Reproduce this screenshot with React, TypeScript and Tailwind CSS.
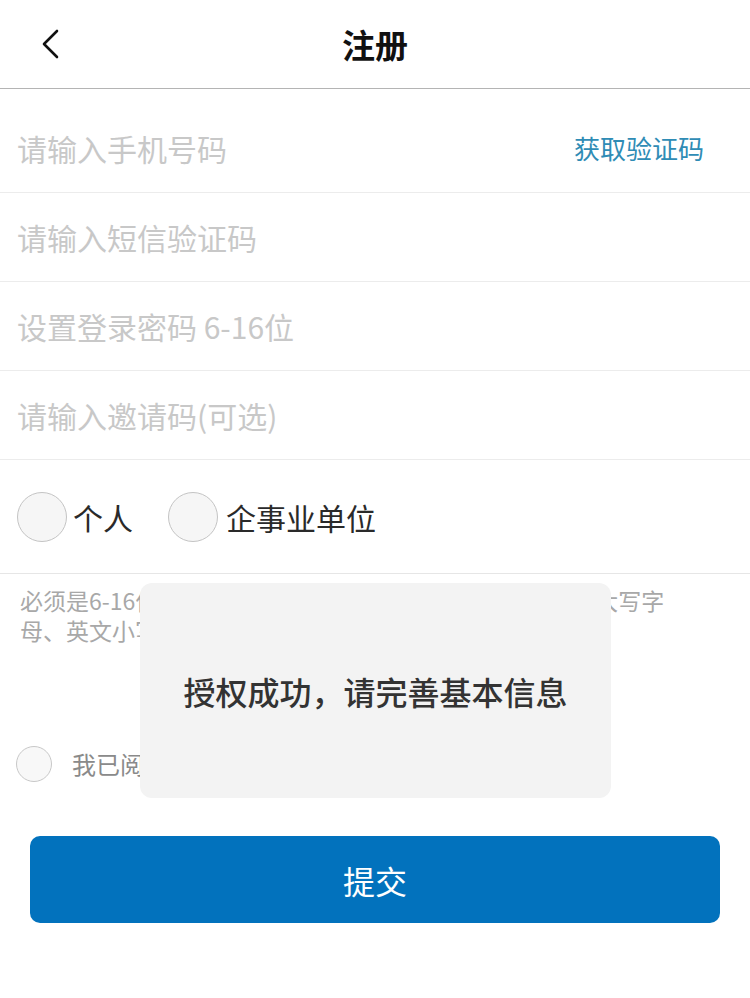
import React from "react";

export default function App() {
  return (
    <div className="relative w-[750px] h-[998px] bg-white font-['Noto_Sans_CJK_SC','Noto_Sans',sans-serif] overflow-hidden">
      {/* Header */}
      <div className="relative h-[89px] border-b border-[#b4b4b4] flex items-center justify-center">
        <button className="absolute left-[36px] top-[26px] w-[30px] h-[36px] flex items-center justify-center">
          <svg width="22" height="32" viewBox="0 0 22 32" fill="none">
            <polyline points="17,3 4,16 17,29" stroke="#111" strokeWidth="2.6" strokeLinecap="round" strokeLinejoin="round" />
          </svg>
        </button>
        <h1 className="text-[33px] font-bold text-[#111] leading-none">注册</h1>
      </div>

      {/* Inputs */}
      <div className="h-[104px] pt-[14px] border-b border-[#ececec] flex items-center justify-between pl-[17px] pr-[46px]">
        <span className="text-[30px] text-[#c8c8c8] leading-none">请输入手机号码</span>
        <span className="text-[26px] text-[#2f8cb5] leading-none">获取验证码</span>
      </div>
      <div className="h-[89px] border-b border-[#ececec] flex items-center pl-[17px]">
        <span className="text-[30px] text-[#c8c8c8] leading-none">请输入短信验证码</span>
      </div>
      <div className="h-[89px] border-b border-[#ececec] flex items-center pl-[17px]">
        <span className="text-[30px] text-[#c8c8c8] leading-none">设置登录密码 6-16位</span>
      </div>
      <div className="h-[89px] border-b border-[#ececec] flex items-center pl-[17px]">
        <span className="text-[30px] text-[#c8c8c8] leading-none">请输入邀请码(可选)</span>
      </div>

      {/* Type radios */}
      <div className="h-[114px] border-b border-[#e6e6e6] flex items-center pl-[17px]">
        <div className="flex items-center">
          <span className="w-[50px] h-[50px] rounded-full border border-[#c4c4c4] bg-[#f6f6f6]" />
          <span className="ml-[6px] text-[30px] text-[#2a2a2a] leading-none">个人</span>
        </div>
        <div className="flex items-center ml-[35px]">
          <span className="w-[50px] h-[50px] rounded-full border border-[#c4c4c4] bg-[#f6f6f6]" />
          <span className="ml-[8px] text-[30px] text-[#2a2a2a] leading-none">企事业单位</span>
        </div>
      </div>

      {/* Hint */}
      <div className="pt-[11px] pl-[20px] text-[23px] leading-[30px] text-[#a8a8a8]">
        <div className="whitespace-nowrap">必须是6-16位字符，密码至少包含以下两种：数字、英文大写字</div>
        <div className="whitespace-nowrap">母、英文小写字母、特殊符号</div>
      </div>

      {/* Agreement */}
      <div className="mt-[101px] flex items-center pl-[16px] h-[36px]">
        <span className="w-[36px] h-[36px] rounded-full border border-[#c8c8c8] bg-[#f8f8f8]" />
        <span className="ml-[20px] text-[24px] text-[#8a8a8a] leading-none">我已阅读并同意《用户协议》</span>
      </div>

      {/* Submit */}
      <div className="mt-[54px] px-[30px]">
        <button className="w-full h-[87px] rounded-[10px] bg-[#0272bd] text-white text-[32px] flex items-center justify-center leading-none">
          提交
        </button>
      </div>

      {/* Toast */}
      <div className="absolute left-[140px] top-[583px] w-[471px] h-[215px] rounded-[12px] bg-[#f3f3f3] flex items-center justify-center">
        <span className="text-[32px] font-medium text-[#333] leading-none">授权成功，请完善基本信息</span>
      </div>
    </div>
  );
}
